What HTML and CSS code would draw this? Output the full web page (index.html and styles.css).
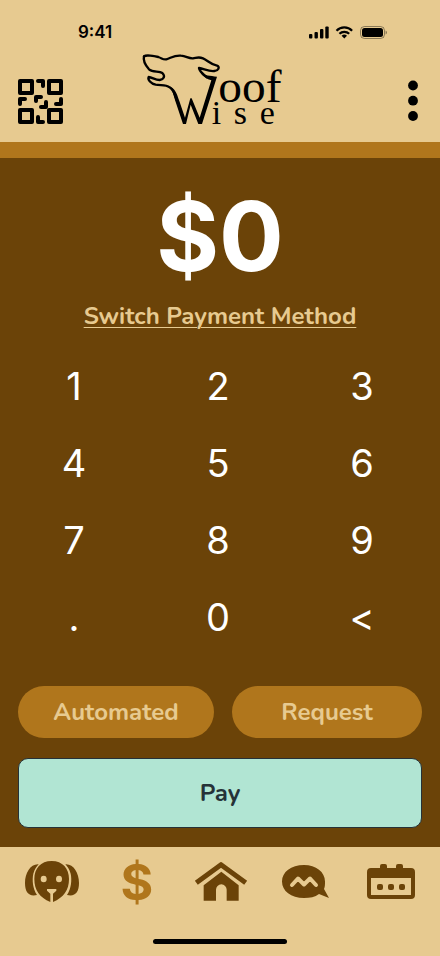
FILE: index.html
```html
<!DOCTYPE html>
<html lang="en">
<head>
    <meta charset="UTF-8">
    <meta name="viewport" content="width=device-width, initial-scale=1.0">
    <title>Woof Wise - Pay</title>
    <link rel="stylesheet" href="styles.css">
</head>
<body>
    <header class="header">
        <div class="status-bar">
            <span class="time">9:41</span>
            <svg class="status-icons" width="78" height="14" viewBox="0 0 78 14">
                <rect x="0" y="9" width="3.400" height="4.500" rx="1"/>
                <rect x="5.500" y="7" width="3.400" height="6.500" rx="1"/>
                <rect x="11" y="4" width="3.400" height="9.500" rx="1"/>
                <rect x="16.300" y="1.500" width="3.400" height="12" rx="1"/>
                <path d="M27.500 5.700a11 11 0 0 1 15.600 0M30.400 8.800a7 7 0 0 1 9.800 0" fill="none" stroke="#000" stroke-width="2.200"/>
                <path d="M35.300 13.500l-2.700-2.800a4 4 0 0 1 5.400 0z"/>
                <rect x="51.500" y="1.500" width="24" height="12" rx="4" fill="none" stroke="#000" stroke-opacity="0.400"/>
                <rect x="53" y="3" width="21" height="9" rx="2.500"/>
                <path d="M76.600 5.500v4a2.200 2.200 0 0 0 0-4z" opacity="0.450"/>
            </svg>
        </div>
        <div class="top-row">
            <button class="icon-btn" aria-label="Scan QR code">
                <svg width="46" height="46" viewBox="0 0 46 46" fill="none" stroke="#000" stroke-width="4" stroke-linecap="round" stroke-linejoin="round">
                    <rect x="2" y="2" width="12" height="12"/>
                    <rect x="31" y="2" width="12" height="12"/>
                    <rect x="2" y="31" width="12" height="12"/>
                    <rect x="31" y="31" width="12" height="12"/>
                    <path d="M20 2h5v5M2 25v-5h5M18 22v-4h5M23 28h5v-5M38 25h5v-5M20 38v5h5"/>
                </svg>
            </button>
            <svg class="logo" width="170" height="73" viewBox="-6 21 510 219" role="img" aria-label="Woof Wise">
                <!-- wolf head running into the W -->
                <path class="wolf-line" d="M27 34C32 29 58 33 70 36C82 40 84 45 94 43C108 39 118 30 138 32C154 33 160 41 174 40C184 39 190 34 204 40C218 46 226 58 246 62C256 66 250 77 238 78C222 80 208 72 192 69C194 82 208 90 216 97"/>
                <path class="wolf-line" d="M27 34C23 50 34 64 42 73C54 83 72 77 82 84C92 94 86 103 74 105C60 105 52 97 41 96C37 104 48 116 62 119C78 122 92 118 104 127C118 136 120 150 126 168"/>
                <path d="M108 126C124 136 127 152 133 168L150 218L166 160H170L194 218L229 106C216 103 204 94 194 80C208 92 226 92 246 95L201 237H190L167 179L153 237H144L121 168Z"/>
                <text class="logo-oof" x="250" y="171">oof</text>
                <text class="logo-ise" x="230" y="236">i</text>
                <text class="logo-ise" x="296" y="236">s</text>
                <text class="logo-ise" x="374" y="236">e</text>
            </svg>
            <button class="icon-btn menu-btn" aria-label="Menu">
                <svg width="10" height="46" viewBox="0 0 10 46">
                    <circle cx="5" cy="6.500" r="4.900"/>
                    <circle cx="5" cy="21.700" r="4.900"/>
                    <circle cx="5" cy="37" r="4.900"/>
                </svg>
            </button>
        </div>
    </header>

    <main class="main">
        <div class="amount" id="amount">$0</div>
        <a class="switch-link" href="#">Switch Payment Method</a>

        <div class="keypad">
            <button>1</button>
            <button>2</button>
            <button>3</button>
            <button>4</button>
            <button>5</button>
            <button>6</button>
            <button>7</button>
            <button>8</button>
            <button>9</button>
            <button>.</button>
            <button>0</button>
            <button>&lt;</button>
        </div>

        <div class="actions">
            <button class="pill automated">Automated</button>
            <button class="pill request">Request</button>
        </div>
        <button class="pay">Pay</button>
    </main>

    <footer class="footer">
        <nav class="nav">
            <a href="#" aria-label="Pets">
                <!-- dog -->
                <svg width="54" height="42" viewBox="0 0 162 126">
                    <path d="M41 10C17 8 0 36 0 66C0 94 12 108 36 102C23 82 21 56 25 38C29 24 35 16 41 10Z"/>
                    <path d="M121 10C145 8 162 36 162 66C162 94 150 108 126 102C139 82 141 56 137 38C133 24 127 16 121 10Z"/>
                    <path d="M80 0C47 0 28 23 28 54C28 88 44 109 76 123V98L66 89V84H94V89L84 98V123C116 109 132 88 132 54C132 23 113 0 80 0Z"/>
                    <ellipse class="cut" cx="56" cy="54" rx="9" ry="10"/>
                    <ellipse class="cut" cx="102" cy="54" rx="9" ry="10"/>
                </svg>
            </a>
            <a href="#" class="nav-pay" aria-current="page">$</a>
            <a href="#" aria-label="Home">
                <!-- house -->
                <svg width="54" height="40" viewBox="10 18 162 120">
                    <path d="M17 80L91 26L165 80" fill="none" stroke="currentColor" stroke-width="15" stroke-linejoin="round"/>
                    <path d="M39 88L92 47L144 88V134H108V101a16 16 0 0 0-32 0V134H39Z"/>
                </svg>
            </a>
            <a href="#" aria-label="Messages">
                <!-- chat bubble -->
                <svg width="48" height="34" viewBox="0 0 48 34">
                    <path d="M22 0C9 0 0 7 0 16.500S9 33 22 33c6 0 11-1 15-4l10 4l-5-9c1-2 1-5 1-7.500C43 7 34 0 22 0Z"/>
                    <path class="cut-line" d="M10 20L16 13.500L22 19.500L28 13.500L34 20"/>
                </svg>
            </a>
            <a href="#" aria-label="Calendar">
                <!-- calendar -->
                <svg width="48" height="36" viewBox="0 0 48 36">
                    <path fill-rule="evenodd" d="M4 4h9V2a2 2 0 0 1 2-2h3a2 2 0 0 1 2 2v2h9V2a2 2 0 0 1 2-2h3a2 2 0 0 1 2 2v2h8a4 4 0 0 1 4 4v23a4 4 0 0 1-4 4H4a4 4 0 0 1-4-4V8a4 4 0 0 1 4-4ZM4 14v17h40V14Z"/>
                    <rect x="10" y="20" width="6" height="6" rx="2"/>
                    <rect x="21" y="20" width="6" height="6" rx="2"/>
                    <rect x="32" y="20" width="6" height="6" rx="2"/>
                </svg>
            </a>
        </nav>
        <div class="home-indicator"></div>
    </footer>

    <script>
        const amount = document.getElementById("amount");
        let value = "0";

        document.querySelectorAll(".keypad button").forEach(function(button) {
            button.addEventListener("click", function() {
                const key = button.textContent;
                if (key === "<") {
                    value = value.slice(0, -1) || "0";
                } else if (key === ".") {
                    if (!value.includes(".")) value += ".";
                } else {
                    value = value === "0" ? key : value + key;
                }
                amount.textContent = "$" + value;
            });
        });
    </script>
</body>
</html>
```
FILE: styles.css
```css
* {
    box-sizing: border-box;
}

body {
    margin: 0;
    min-height: 100vh;
    display: flex;
    flex-direction: column;
    font-family: Inter, sans-serif;
    background-color: #6b4308;
    color: #000;
}

button {
    border: none;
    padding: 0;
    background: none;
    color: inherit;
    font-family: inherit;
    cursor: pointer;
}

svg {
    display: block;
}

/* Header */
.header {
    background-color: #e7ca90;
    border-bottom: 16px solid #b0761c;
}

.status-bar {
    display: flex;
    justify-content: space-between;
    align-items: flex-end;
    height: 42px;
    padding: 0 53px 0 78px;
}

.time {
    font-size: 17px;
    font-weight: 600;
    line-height: 20px;
}

.status-icons {
    margin-bottom: 3px;
}

.top-row {
    display: grid;
    grid-template-columns: 1fr auto 1fr;
    align-items: end;
    padding: 10px 22px 17px 18px;
}

.icon-btn {
    justify-self: start;
}

.menu-btn {
    justify-self: end;
}

.logo {
    overflow: visible;
}

.wolf-line {
    fill: none;
    stroke: #000;
    stroke-width: 7;
    stroke-linecap: round;
    stroke-linejoin: round;
}

.logo text {
    font-family: "Liberation Serif", serif;
}

.logo-oof {
    font-size: 142px;
}

.logo-ise {
    font-size: 102px;
}

/* Payment */
.main {
    flex: 1;
    display: flex;
    flex-direction: column;
    padding: 30px 18px 19px;
}

.amount {
    color: #fff;
    font-size: 96px;
    font-weight: 700;
    line-height: 96px;
    text-align: center;
}

.switch-link,
.pill,
.pay {
    font-family: Nunito, "Open Sans", sans-serif;
    font-size: 24px;
    font-weight: 700;
    line-height: 32px;
}

.switch-link {
    align-self: center;
    margin-top: 16px;
    color: #e7ca90;
    text-decoration-thickness: 1px;
    text-underline-offset: 3px;
}

.keypad {
    display: grid;
    grid-template-columns: repeat(3, 1fr);
    grid-auto-rows: 77px;
    margin: 16px -12px 0 -16px;
}

.keypad button {
    color: #fff;
    font-size: 38px;
    line-height: 77px;
}

.actions {
    display: flex;
    gap: 18px;
    margin-top: 30px;
}

.pill {
    height: 52px;
    border-radius: 26px;
    background-color: #b0761c;
    color: #e7ca90;
}

.automated {
    flex: 196;
}

.request {
    flex: 190;
}

.pay {
    height: 70px;
    margin-top: 20px;
    border: 1px solid #263238;
    border-radius: 10px;
    background-color: #b1e5d3;
    color: #263238;
}

/* Bottom navigation */
.footer {
    background-color: #e7ca90;
    padding-bottom: 12px;
}

.nav {
    display: grid;
    grid-template-columns: repeat(5, 1fr);
    height: 70px;
    padding: 0 7px 0 10px;
}

.nav a {
    display: flex;
    align-items: center;
    justify-content: center;
    color: #6b4308;
    fill: currentColor;
    text-decoration: none;
}

.nav .nav-pay {
    color: #b0761c;
    font-size: 50px;
    font-weight: 700;
}

.cut {
    fill: #e7ca90;
}

.cut-line {
    fill: none;
    stroke: #e7ca90;
    stroke-width: 4;
    stroke-linecap: round;
    stroke-linejoin: round;
}

.home-indicator {
    width: 134px;
    height: 5px;
    margin: 22px auto 0;
    border-radius: 3px;
    background-color: #000;
}
```
